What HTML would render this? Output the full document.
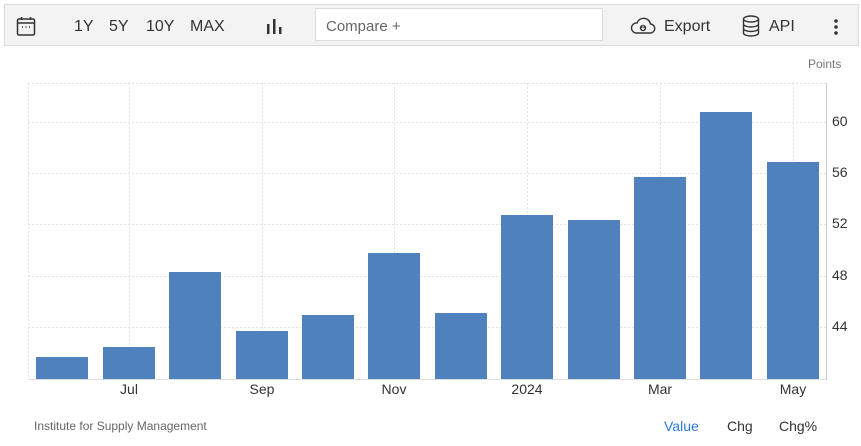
<!DOCTYPE html>
<html><head><style>
body{margin:0;width:861px;height:446px;background:#fff;font-family:"Liberation Sans",sans-serif;position:relative;overflow:hidden}
.tb{position:absolute;left:4px;top:4px;width:853px;height:40px;background:#f3f3f3;border:1px solid #dcdcdc}
.t{position:absolute;font-size:16px;color:#333;top:18px}
.cmp{position:absolute;left:315px;top:8px;width:288px;height:33px;background:#fff;border:1px solid #ddd;box-sizing:border-box;font-size:15px;color:#666;padding:9px 10px}
.bar{position:absolute;background:#4f81bd;width:52px}
.yl{position:absolute;left:832px;font-size:14px;color:#333}
.xl{position:absolute;top:381px;font-size:14px;color:#333;transform:translateX(-50%)}
</style></head><body>
<div class="tb"></div>
<svg style="position:absolute;left:16px;top:16px" width="20" height="21" viewBox="0 0 20 21" fill="none" stroke="#333" stroke-width="1.5"><rect x="1.5" y="3" width="17" height="16" rx="1.5"/><line x1="1.5" y1="7" x2="18.5" y2="7"/><line x1="5.5" y1="1" x2="5.5" y2="4"/><line x1="14.5" y1="1" x2="14.5" y2="4"/><path d="M6 11h1M9.5 11h1M13 11h1" stroke-width="1.6"/></svg>
<div class="t" style="left:74px">1Y</div><div class="t" style="left:109px">5Y</div><div class="t" style="left:146px">10Y</div><div class="t" style="left:190px">MAX</div>
<svg style="position:absolute;left:266px;top:18px" width="16" height="16"><rect x="1" y="6" width="2.5" height="10" fill="#333"/><rect x="7" y="1" width="2.5" height="15" fill="#333"/><rect x="13" y="9" width="2.5" height="7" fill="#333"/></svg>
<div class="cmp">Compare +</div>
<svg style="position:absolute;left:630px;top:17px" width="26" height="18" viewBox="0 0 26 18" fill="none" stroke="#333" stroke-width="1.4"><path d="M6 16h14a4.5 4.5 0 0 0 0.5-9A7 7 0 0 0 7 6a5 5 0 0 0-1 10z"/><circle cx="13" cy="11" r="3.2" fill="#333" stroke="none"/><path d="M13 8.5v4M11.5 11l1.5 1.5 1.5-1.5" stroke="#fff" stroke-width="1"/></svg>
<div class="t" style="left:664px">Export</div>
<svg style="position:absolute;left:742px;top:15px" width="18" height="22" viewBox="0 0 18 22" fill="none" stroke="#333" stroke-width="1.4"><ellipse cx="9" cy="4" rx="7.5" ry="3"/><path d="M1.5 4v14c0 1.7 3.4 3 7.5 3s7.5-1.3 7.5-3V4M1.5 9c0 1.7 3.4 3 7.5 3s7.5-1.3 7.5-3M1.5 13.5c0 1.7 3.4 3 7.5 3s7.5-1.3 7.5-3"/></svg>
<div class="t" style="left:769px">API</div>
<svg style="position:absolute;left:833px;top:18px" width="6" height="18"><circle cx="3" cy="3" r="1.8" fill="#333"/><circle cx="3" cy="9" r="1.8" fill="#333"/><circle cx="3" cy="15" r="1.8" fill="#333"/></svg>
<div style="position:absolute;left:808px;top:57px;font-size:12px;color:#777">Points</div>
<svg style="position:absolute;left:0;top:0" width="861" height="446">
<g stroke="#e2e2e2" stroke-dasharray="2,2" stroke-width="1">
<line x1="28" y1="83.5" x2="826" y2="83.5"/><line x1="28" y1="122.5" x2="826" y2="122.5"/><line x1="28" y1="173.5" x2="826" y2="173.5"/><line x1="28" y1="224.5" x2="826" y2="224.5"/><line x1="28" y1="276.5" x2="826" y2="276.5"/><line x1="28" y1="327.5" x2="826" y2="327.5"/>
<line x1="28.5" y1="83" x2="28.5" y2="379"/><line x1="129.5" y1="83" x2="129.5" y2="379"/><line x1="262.5" y1="83" x2="262.5" y2="379"/><line x1="394.5" y1="83" x2="394.5" y2="379"/><line x1="527.5" y1="83" x2="527.5" y2="379"/><line x1="660.5" y1="83" x2="660.5" y2="379"/><line x1="793.5" y1="83" x2="793.5" y2="379"/>
</g>
<line x1="826.5" y1="83" x2="826.5" y2="380" stroke="#ccc"/>
<line x1="28" y1="379.5" x2="826" y2="379.5" stroke="#ddd"/>
</svg>
<div class="bar" style="left:36px;top:357px;height:22px"></div>
<div class="bar" style="left:103px;top:347px;height:32px"></div>
<div class="bar" style="left:169px;top:272px;height:107px"></div>
<div class="bar" style="left:236px;top:331px;height:48px"></div>
<div class="bar" style="left:302px;top:315px;height:64px"></div>
<div class="bar" style="left:368px;top:253px;height:126px"></div>
<div class="bar" style="left:435px;top:313px;height:66px"></div>
<div class="bar" style="left:501px;top:215px;height:164px"></div>
<div class="bar" style="left:568px;top:220px;height:159px"></div>
<div class="bar" style="left:634px;top:177px;height:202px"></div>
<div class="bar" style="left:700px;top:112px;height:267px"></div>
<div class="bar" style="left:767px;top:162px;height:217px"></div>
<div class="yl" style="top:113px">60</div><div class="yl" style="top:164px">56</div><div class="yl" style="top:215px">52</div><div class="yl" style="top:267px">48</div><div class="yl" style="top:318px">44</div>
<div class="xl" style="left:129px">Jul</div><div class="xl" style="left:262px">Sep</div><div class="xl" style="left:394px">Nov</div><div class="xl" style="left:527px">2024</div><div class="xl" style="left:660px">Mar</div><div class="xl" style="left:793px">May</div>
<div style="position:absolute;left:34px;top:419px;font-size:12px;color:#666">Institute for Supply Management</div>
<div style="position:absolute;left:664px;top:418px;font-size:14px;color:#2a7ae2">Value</div>
<div style="position:absolute;left:727px;top:418px;font-size:14px;color:#333">Chg</div>
<div style="position:absolute;left:779px;top:418px;font-size:14px;color:#333">Chg%</div>
</body></html>
